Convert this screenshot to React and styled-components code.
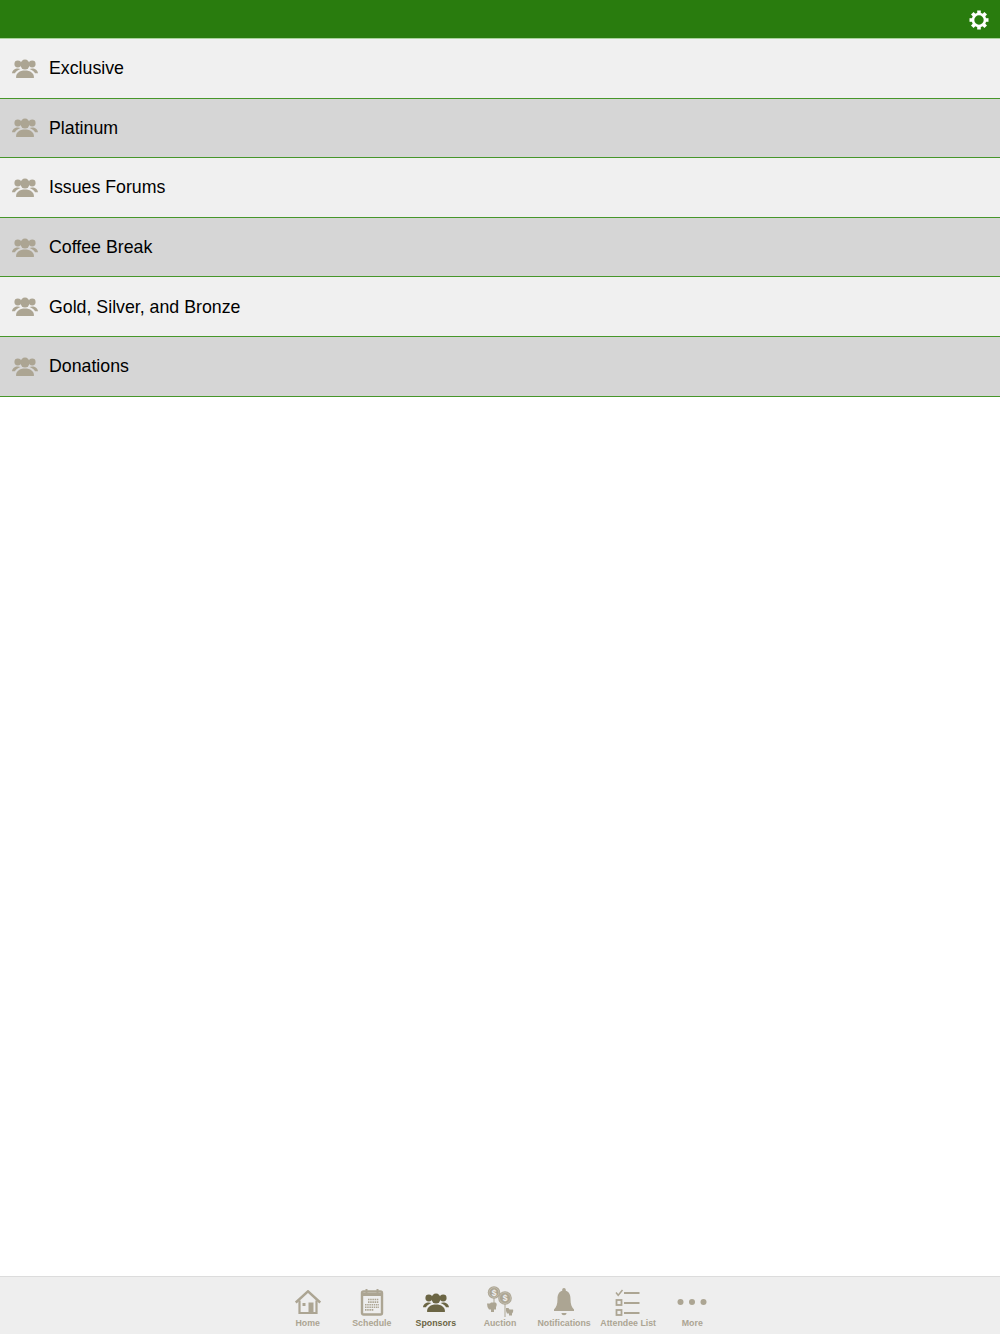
import styled, { createGlobalStyle } from "styled-components";

const GlobalStyle = createGlobalStyle`
  html, body {
    margin: 0;
    padding: 0;
    background: #fff;
    font-family: "Liberation Sans", Arial, sans-serif;
  }
`;
const Page = styled.div`
  display: flex;
  flex-direction: column;
  width: 1000px;
  height: 1334px;
  overflow: hidden;
`;
const TopBar = styled.header`
  flex: none;
  display: flex;
  align-items: center;
  justify-content: flex-end;
  height: 39px;
  padding: 1px 11px 0 0;
  box-sizing: border-box;
  background: #297c0e;
  border-bottom: 1px solid #a9d39b;
`;
const List = styled.main`
  flex: 1;
`;
const Row = styled.div`
  display: flex;
  align-items: center;
  gap: 11px;
  height: 58.6px;
  padding-left: 12px;
  box-sizing: content-box;
  font-size: 17.75px;
  color: #000;
  background: ${(p) => (p.$alt ? "#d6d6d6" : "#f0f0f0")};
  border-bottom: 1px solid #46962a;
`;
const RowIcon = styled.span`
  display: flex;
  color: #aca593;
`;
const RowName = styled.span`
  padding-top: 1px;
`;
const TabBar = styled.nav`
  flex: none;
  display: flex;
  justify-content: center;
  height: 57px;
  background: #eeeeee;
  border-top: 1px solid #dcdcdc;
`;
const Tab = styled.div`
  display: flex;
  flex-direction: column;
  align-items: center;
  width: 64.1px;
  color: ${(p) => (p.$active ? "#6b6544" : "#aca593")};
`;
const TabIcon = styled.div`
  display: flex;
  align-items: center;
  justify-content: center;
  height: 32px;
  margin-top: 9px;
`;
const TabLabel = styled.span`
  font-size: 8.8px;
  line-height: 11px;
  font-weight: 700;
  white-space: nowrap;
`;

const PeopleIcon = () => (
  <svg width="26" height="19" viewBox="0 0 26 19" fill="currentColor">
    <circle cx="5.800" cy="5" r="3.400" />
    <circle cx="20.200" cy="5" r="3.400" />
    <path d="M0 14.300c.3-3.200 2.800-4.900 5.800-4.900 1 0 1.900.2 2.600.5C5.500 11 3.800 12.400 3 14.300H0z" />
    <path d="M26 14.300c-.3-3.200-2.800-4.900-5.800-4.900-1 0-1.900.2-2.600.5 2.900 1.100 4.600 2.500 5.400 4.400H26z" />
    <ellipse cx="13" cy="5.600" rx="4.500" ry="5" />
    <path d="M4 18.500c0-4.300 3.500-7 9-7s9 2.700 9 7c0 .3-.2.500-.5.500h-17c-.3 0-.5-.2-.5-.5z" />
  </svg>
);

const Gear = () => (
  <svg width="20" height="20" viewBox="0 0 20 20" fill="#fff">
    <circle cx="10" cy="10" r="6" fill="none" stroke="#fff" strokeWidth="2.600" />
    {[0, 45, 90, 135, 180, 225, 270, 315].map((a) => (
      <rect key={a} x="8.200" y="0.500" width="3.600" height="4" transform={`rotate(${a} 10 10)`} />
    ))}
  </svg>
);

const HomeIcon = () => (
  <svg width="26" height="24" viewBox="0 0 26 24" fill="none" stroke="currentColor">
    <path d="M.8 12.500 13 1.300l12.200 11.200" strokeWidth="2.400" />
    <path d="M4.500 10.500V23h17V10.500" strokeWidth="2.200" />
    <rect x="13.500" y="12.500" width="5" height="10" fill="currentColor" stroke="none" />
    <rect x="7.500" y="13" width="3" height="3" fill="currentColor" stroke="none" />
  </svg>
);

const ScheduleIcon = () => {
  const lines = [0, 1, 2, 3, 4].map((y) => (
    <path key={y} d={`M${y < 2 ? 8 : 5} ${11.500 + y * 2.600}h${y < 2 ? 11 : y === 4 ? 9 : 14}`} />
  ));
  return (
    <svg width="24" height="28" viewBox="0 0 24 28" fill="none" stroke="currentColor">
      <rect x="2" y="3.500" width="20" height="23" rx="1.500" strokeWidth="2.400" />
      <path d="M2 6.500h20" strokeWidth="3" />
      <path d="M6.500 1v5M17.500 1v5" strokeWidth="2" />
      <g strokeWidth="1.600" strokeDasharray="1.500 .7">{lines}</g>
    </svg>
  );
};

const Coin = ({ cx, cy, r }) => (
  <g>
    <circle cx={cx} cy={cy} r={r} />
    <circle cx={cx} cy={cy} r={r - 1.300} fill="none" stroke="#d5d0c4" strokeWidth=".5" />
    <text x={cx} y={cy + 3} textAnchor="middle" fontSize="8.500" fontWeight="700" fill="#eee" fontFamily="Liberation Sans">
      $
    </text>
  </g>
);

const AuctionIcon = () => (
  <svg width="28" height="32" viewBox="0 0 28 32" fill="currentColor">
    <Coin cx={8} cy={6.500} r={6.200} />
    <Coin cx={19} cy={12} r={6.800} />
    <rect x="7.500" y="12" width="1" height="5" />
    <rect x="18.500" y="18" width="1" height="13" />
    <path d="M1 17.500h3l1-1h4.500l1 1c.5 1 0 2.500-.5 3.500v2.500H8V26H5v-2.500H3L1.500 21z" />
    <path d="M20 22h2.500l1 1.500h3.500c.5 1.500 0 3-1 4v2h-3v-2h-2l-1-2.500z" />
  </svg>
);

const BellIcon = () => (
  <svg width="22" height="28" viewBox="0 0 22 28" fill="currentColor">
    <path d="M11 0c1.100 0 1.800.800 1.800 2v.8C16.400 4 17.500 7.200 17.500 11c0 5 1 8 3.500 10.500V23H1v-1.500C3.500 19 4.500 16 4.500 11c0-3.800 1.100-7 4.700-8.200V2C9.200.8 9.900 0 11 0z" />
    <path d="M8.500 25h5c0 1.300-1.100 2.300-2.500 2.300S8.500 26.300 8.500 25z" />
  </svg>
);

const AttendeeIcon = () => (
  <svg width="26" height="27" viewBox="0 0 26 27" fill="none" stroke="currentColor">
    <path d="M1 3.500l2.200 2.700L7.500 1" strokeWidth="1.500" />
    <path d="M9 4h15.500M9 14h15.500M9 24h15.500" strokeWidth="1.800" />
    <rect x="1.500" y="11" width="5" height="5" strokeWidth="1.800" />
    <rect x="1.500" y="21" width="5" height="5" strokeWidth="1.800" />
  </svg>
);

const MoreIcon = () => (
  <svg width="30" height="8" viewBox="0 0 30 8" fill="currentColor">
    <circle cx="3.500" cy="4" r="3" />
    <circle cx="15" cy="4" r="3" />
    <circle cx="26.500" cy="4" r="3" />
  </svg>
);

const rows = [
  "Exclusive",
  "Platinum",
  "Issues Forums",
  "Coffee Break",
  "Gold, Silver, and Bronze",
  "Donations",
];

const tabs = [
  { label: "Home", icon: <HomeIcon /> },
  { label: "Schedule", icon: <ScheduleIcon /> },
  { label: "Sponsors", icon: <PeopleIcon />, active: true },
  { label: "Auction", icon: <AuctionIcon /> },
  { label: "Notifications", icon: <BellIcon /> },
  { label: "Attendee List", icon: <AttendeeIcon /> },
  { label: "More", icon: <MoreIcon /> },
];

export default function App() {
  return (
    <Page>
      <GlobalStyle />
      <TopBar>
        <Gear />
      </TopBar>
      <List>
        {rows.map((name, i) => (
          <Row key={name} $alt={i % 2 === 1}>
            <RowIcon>
              <PeopleIcon />
            </RowIcon>
            <RowName>{name}</RowName>
          </Row>
        ))}
      </List>
      <TabBar>
        {tabs.map((t) => (
          <Tab key={t.label} $active={t.active}>
            <TabIcon>{t.icon}</TabIcon>
            <TabLabel>{t.label}</TabLabel>
          </Tab>
        ))}
      </TabBar>
    </Page>
  );
}
